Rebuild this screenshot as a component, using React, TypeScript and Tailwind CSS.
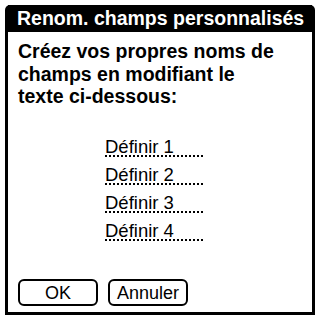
import React from 'react'

const fields = ['Définir 1', 'Définir 2', 'Définir 3', 'Définir 4']

export default function App() {
  return (
    <div className="h-[321px] w-[320px] bg-white pl-[5px] pt-[5px] font-['Liberation_Sans',Arial,sans-serif] text-black">
      <div className="flex h-[310px] w-[310px] flex-col rounded-t-[5px] border-x-[3px] border-b-[3px] border-black">
        <div className="flex h-[27px] items-center bg-black pl-[9px] text-[19.5px] font-bold leading-none text-white">
          Renom. champs personnalisés
        </div>
        <div className="flex flex-1 flex-col pl-[10px]">
          <p className="mt-[8px] text-[19.5px] font-bold leading-[22.5px]">
            Créez vos propres noms de
            <br />
            champs en modifiant le
            <br />
            texte ci-dessous:
          </p>
          <div className="mt-[29px] flex flex-col gap-[8px] pl-[87px]">
            {fields.map((f) => (
              <div key={f} className="h-[20px] w-[98px] border-b-2 border-dotted border-black text-[18.5px] leading-[19px]">
                {f}
              </div>
            ))}
          </div>
          <div className="mt-auto mb-[6px] flex gap-[10px]">
            <button className="h-[27px] w-[80px] rounded-[6px] border-2 border-black text-[18px] leading-none">OK</button>
            <button className="h-[27px] w-[80px] rounded-[6px] border-2 border-black text-[18px] leading-none">Annuler</button>
          </div>
        </div>
      </div>
    </div>
  )
}
